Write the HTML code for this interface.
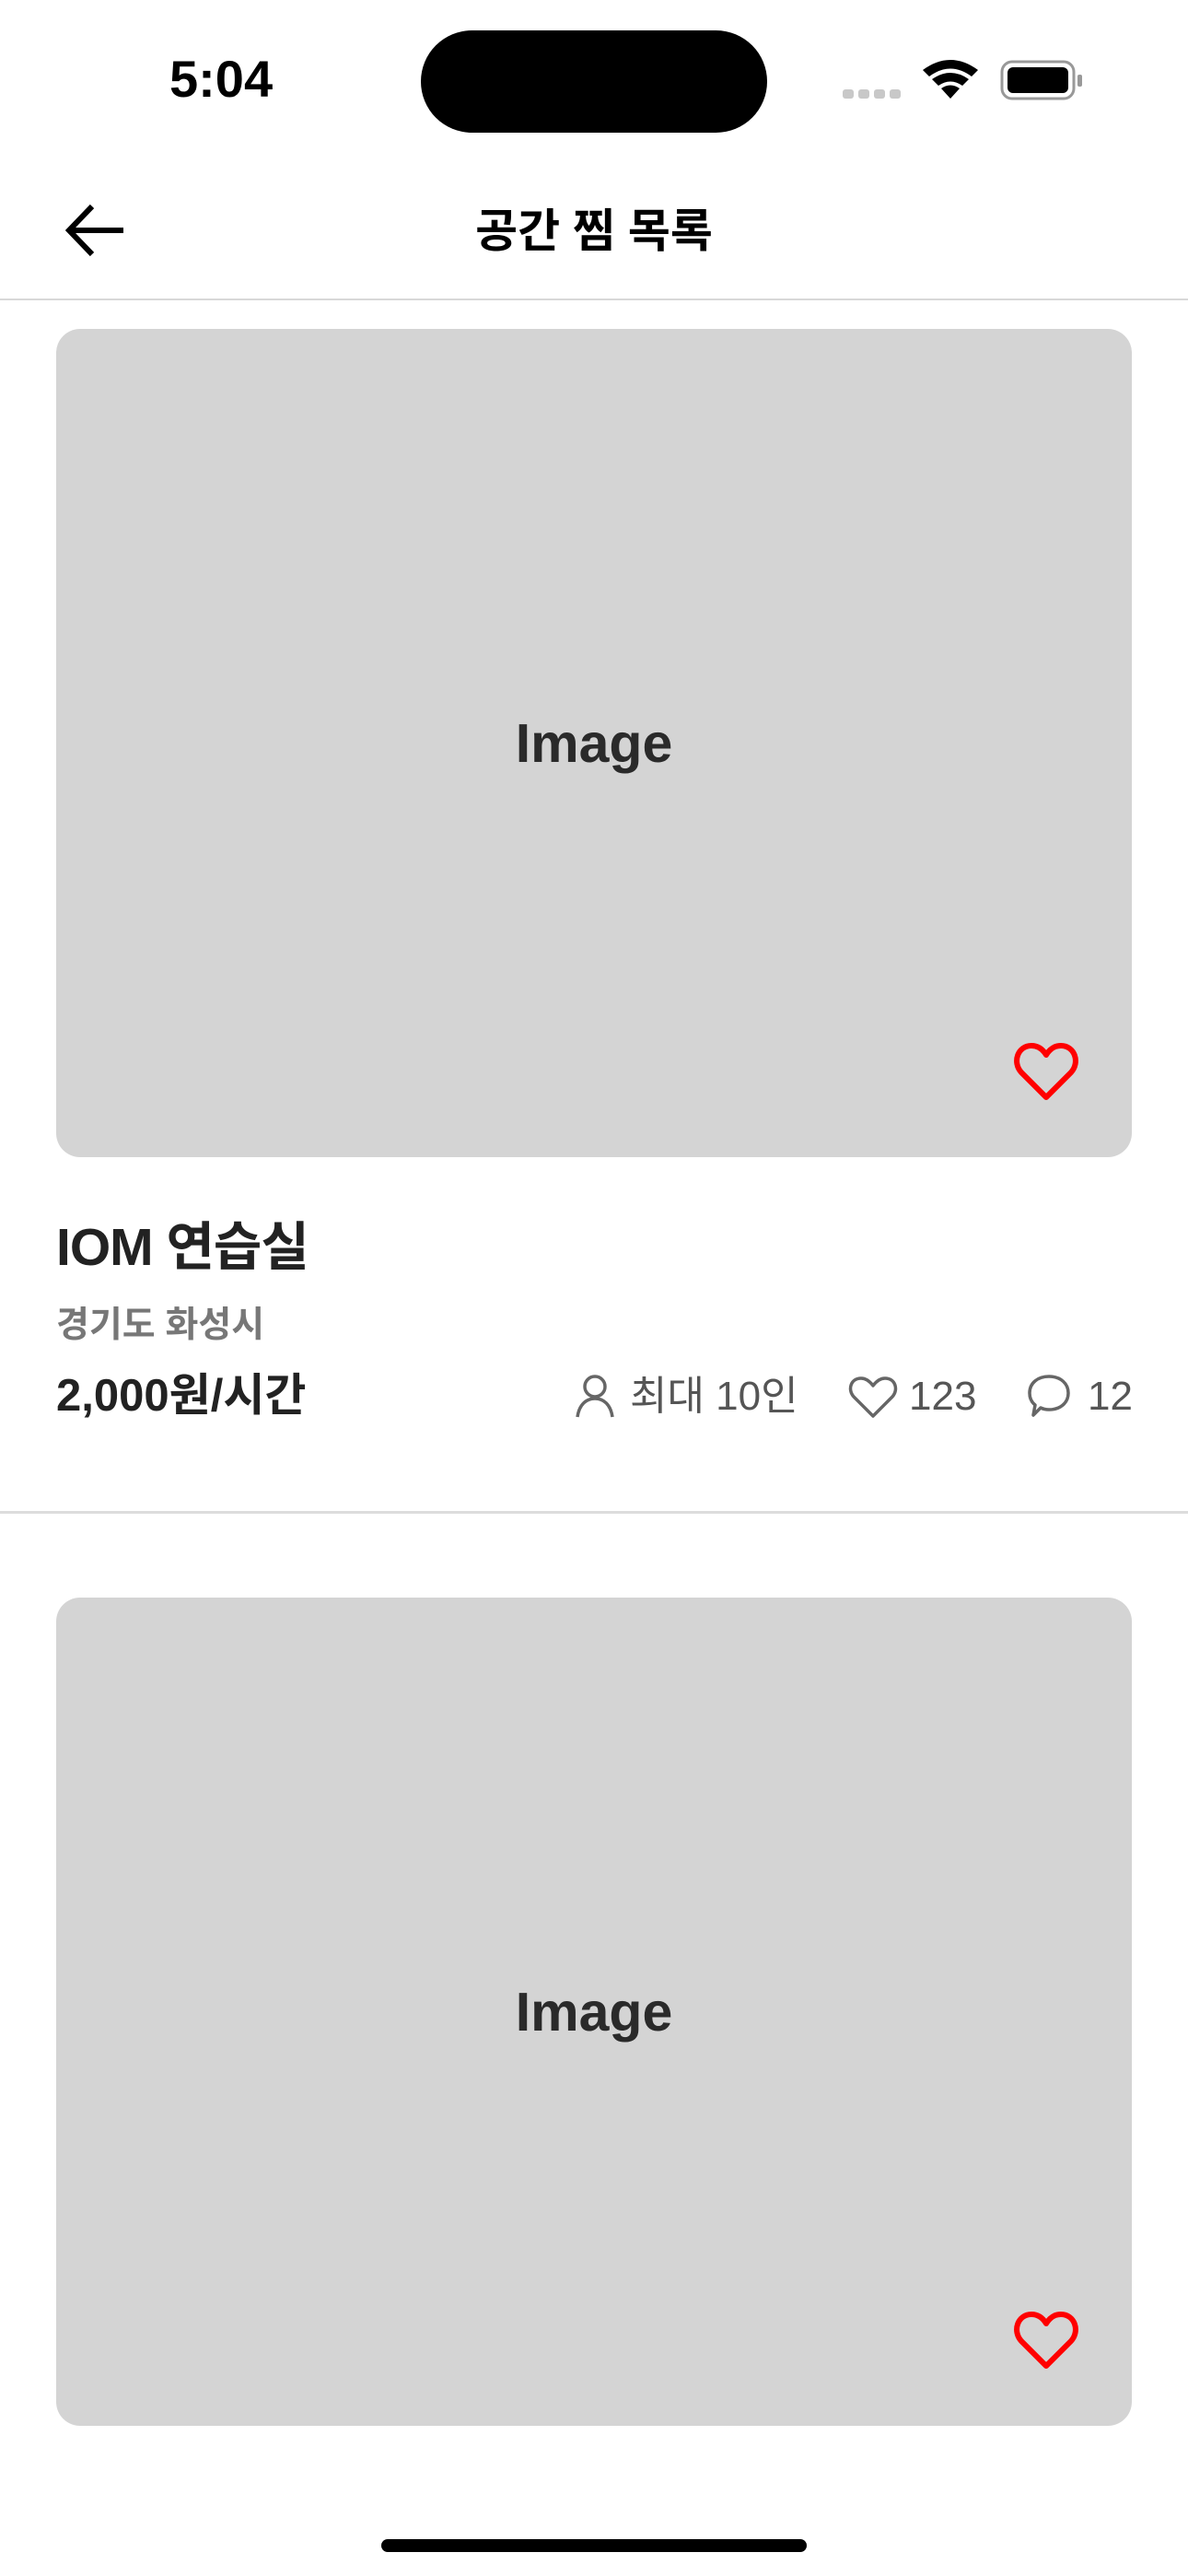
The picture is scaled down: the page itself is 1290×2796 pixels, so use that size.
<!DOCTYPE html>
<html><head><meta charset="utf-8"><style>
*{margin:0;padding:0;box-sizing:border-box}
body{width:1290px;height:2796px;background:#fff;position:relative;overflow:hidden;font-family:"Liberation Sans","Noto Sans CJK KR",sans-serif;color:#222}
.abs{position:absolute}
.img{position:absolute;left:61px;width:1168px;height:899px;background:#d4d4d4;border-radius:26px}
.img .t{position:absolute;left:0;right:0;top:414px;text-align:center;font-size:59px;font-weight:bold;color:#2a2a2a;line-height:72px}
.img svg{position:absolute;left:1040px;top:774px}
</style></head><body>
<div class="abs" style="left:184px;top:54px;font-size:56px;font-weight:bold;color:#000;line-height:64px">5:04</div>
<div class="abs" style="left:457px;top:33px;width:376px;height:111px;background:#000;border-radius:56px"></div>
<svg class="abs" style="left:912px;top:60px" width="270" height="52" viewBox="0 0 270 52">
<g fill="#c8c8c8"><rect x="3" y="37" width="12" height="10" rx="3"/><rect x="20" y="37" width="12" height="10" rx="3"/><rect x="37" y="37" width="12" height="10" rx="3"/><rect x="54" y="37" width="12" height="10" rx="3"/></g>
<g fill="#000"><path d="M90 16 Q120 -6 150 16 L143 23 Q120 6 97 23Z"/><path d="M100 26 Q120 12 140 26 L133 33 Q120 24 107 33Z"/><path d="M110 36 Q120 29 130 36 L120 47Z"/></g>
<rect x="176" y="7" width="78" height="40" rx="11" fill="none" stroke="#999" stroke-width="3"/>
<rect x="182" y="13" width="66" height="28" rx="6" fill="#000"/>
<rect x="258" y="21" width="5" height="13" rx="2" fill="#999"/>
</svg>
<svg class="abs" style="left:70px;top:218px" width="70" height="64" viewBox="0 0 70 64"><path d="M64 32 H6 M30 6 L5 32 L30 58" fill="none" stroke="#000" stroke-width="6"/></svg>
<div class="abs" style="left:0;width:1290px;top:217px;text-align:center;font-size:50px;font-weight:bold;color:#000;line-height:68px">공간 찜 목록</div>
<div class="abs" style="left:0;top:324px;width:1290px;height:2px;background:#d8d8d8"></div>

<div class="img" style="top:357px"><div class="t">Image</div>
<svg width="70" height="66" viewBox="0 0 70 66"><path d="M35 60 L8 33 C-2 22 4 4 19 4 C27 4 32 9 35 14 C38 9 43 4 51 4 C66 4 72 22 62 33 Z" fill="none" stroke="#f00" stroke-width="6" stroke-linejoin="round"/></svg></div>

<div class="abs" style="left:61px;top:1318px;font-size:57px;font-weight:bold;color:#222;line-height:72px;letter-spacing:-1px">IOM 연습실</div>
<div class="abs" style="left:61px;top:1414px;font-size:39px;font-weight:bold;color:#777;line-height:50px">경기도 화성시</div>
<div class="abs" style="left:61px;top:1485px;font-size:49px;font-weight:bold;color:#222;line-height:60px">2,000원/시간</div>
<svg class="abs" style="left:622px;top:1490px" width="50" height="50" viewBox="0 0 50 50"><circle cx="24" cy="15" r="11" fill="none" stroke="#666" stroke-width="3.5"/><path d="M5 48 C7 34 15 28 24 28 C33 28 41 34 43 48" fill="none" stroke="#666" stroke-width="3.5"/></svg>
<div class="abs" style="left:684px;top:1487px;font-size:44px;color:#555;line-height:58px">최대 10인</div>
<svg class="abs" style="left:920px;top:1492px" width="56" height="50" viewBox="0 0 56 50"><path d="M28 45 L7 24 C0 16 4 4 15 4 C21 4 25 8 28 12 C31 8 35 4 41 4 C52 4 56 16 49 24 Z" fill="none" stroke="#666" stroke-width="3.5" stroke-linejoin="round"/></svg>
<div class="abs" style="left:987px;top:1487px;font-size:44px;color:#555;line-height:58px">123</div>
<svg class="abs" style="left:1114px;top:1490px" width="54" height="50" viewBox="0 0 54 50"><path d="M8 46 L10 35 C5 31 4 26 4 22 C4 11 13 4 25 4 C38 4 46 12 46 22 C46 33 37 40 25 40 C21 40 18 39 16 38 Z" fill="none" stroke="#666" stroke-width="3.5" stroke-linejoin="round"/></svg>
<div class="abs" style="left:1181px;top:1487px;font-size:44px;color:#555;line-height:58px">12</div>
<div class="abs" style="left:0;top:1640px;width:1290px;height:3px;background:#dcdcdc"></div>

<div class="img" style="top:1734px"><div class="t">Image</div>
<svg width="70" height="66" viewBox="0 0 70 66"><path d="M35 60 L8 33 C-2 22 4 4 19 4 C27 4 32 9 35 14 C38 9 43 4 51 4 C66 4 72 22 62 33 Z" fill="none" stroke="#f00" stroke-width="6" stroke-linejoin="round"/></svg></div>

<div class="abs" style="left:414px;top:2756px;width:462px;height:14px;background:#000;border-radius:7px"></div>
</body></html>
